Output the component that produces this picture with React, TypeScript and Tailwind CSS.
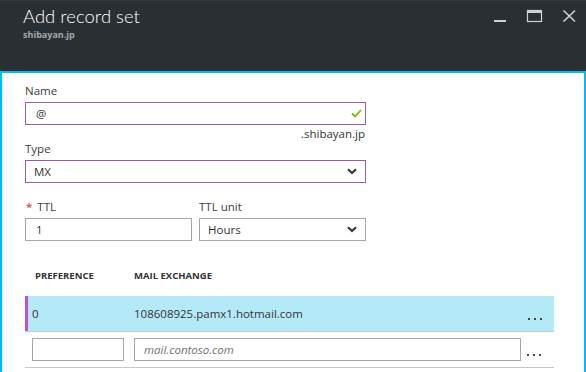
import React from "react";

function Chevron() {
  return (
    <svg width="10" height="7" viewBox="0 0 10 7" className="ml-auto">
      <polyline points="1,1.2 5,5 9,1.2" fill="none" stroke="#333" strokeWidth="2" />
    </svg>
  );
}

function Dots() {
  return (
    <div className="flex gap-[4px] self-end mb-[11px]">
      <div className="w-[2px] h-[2px] bg-[#444]" />
      <div className="w-[2px] h-[2px] bg-[#444]" />
      <div className="w-[2px] h-[2px] bg-[#444]" />
    </div>
  );
}

export default function App() {
  return (
    <div className="w-[586px] h-[372px] overflow-hidden bg-white flex flex-col font-['Open_Sans',sans-serif] text-[#333]">
      {/* Header */}
      <div className="h-[71px] bg-[#2a2f34] border-t border-[#353a40] flex shrink-0">
        <div className="pl-[23px] flex flex-col">
          <div className="mt-[3px] h-[24px] leading-[24px] text-[18.5px] font-light text-white font-['Lato',sans-serif]">
            Add record set
          </div>
          <div className="mt-px h-[12px] leading-[12px] text-[9px] font-bold text-[#a4a8ad]">shibayan.jp</div>
        </div>
        <div className="ml-auto flex pr-[6px] -mt-px">
          <svg width="34" height="30" viewBox="0 0 34 30">
            <rect x="4" y="20" width="12" height="2" fill="#cfd1d3" />
          </svg>
          <svg width="36" height="30" viewBox="0 0 36 30">
            <rect x="3.5" y="10.5" width="14" height="11" fill="none" stroke="#cfd1d3" strokeWidth="1.2" />
            <rect x="3" y="10" width="15" height="3" fill="#cfd1d3" />
          </svg>
          <svg width="20" height="30" viewBox="0 0 20 30">
            <path d="M3.5 10.5 L15 21.5 M15 10.5 L3.5 21.5" stroke="#cfd1d3" strokeWidth="1.6" />
          </svg>
        </div>
      </div>

      {/* Body */}
      <div className="flex-1 border-x-2 border-t-2 border-[#00bcf2] pl-[23px] pt-[10px] text-[11.5px]">
        <div className="h-[16px] leading-[16px] text-[#3c3c3c]">Name</div>
        <div className="mt-[3px] w-[341px] h-[23px] border border-[#9d5aa6] flex items-center pl-[10px] pr-[3px]">
          <span>@</span>
          <svg width="11" height="9" viewBox="0 0 11 9" className="ml-auto">
            <polyline points="1,4.5 4,7.5 10,1" fill="none" stroke="#7fba00" strokeWidth="1.8" />
          </svg>
        </div>
        <div className="mt-[2px] w-[341px] h-[14px] leading-[14px] text-right pr-px">.shibayan.jp</div>
        <div className="h-[16px] leading-[16px] text-[#3c3c3c]">Type</div>
        <div className="mt-[3px] w-[341px] h-[23px] border border-[#9d5aa6] flex items-center pl-[8px] pr-[8px]">
          <span>MX</span>
          <Chevron />
        </div>

        <div className="mt-[16px] flex gap-[7px] w-[341px]">
          <div className="w-[167px]">
            <div className="h-[16px] leading-[16px] pl-px text-[#3c3c3c]">
              <span className="text-[#e81123] mr-[5px]">*</span>TTL
            </div>
            <div className="mt-[3px] h-[23px] border border-[#a6a6a6] flex items-center pl-[10px]">1</div>
          </div>
          <div className="w-[167px]">
            <div className="h-[16px] leading-[16px] text-[#3c3c3c]">TTL unit</div>
            <div className="mt-[3px] h-[23px] border border-[#a6a6a6] flex items-center pl-[8px] pr-[8px]">
              <span>Hours</span>
              <Chevron />
            </div>
          </div>
        </div>

        {/* Table */}
        <div className="mt-[28px] h-[14px] leading-[14px] flex text-[9.5px] font-bold uppercase text-[#333]">
          <div className="w-[109px] pl-[10px]">Preference</div>
          <div>Mail exchange</div>
        </div>
        <div className="mt-[13px] w-[529px] h-[36px] bg-[#b4eaf8] border-b border-[#c8c8c8] flex items-center">
          <div className="w-[3px] self-stretch bg-[#bf4fd4]" />
          <div className="w-[106px] pl-[4px]">0</div>
          <div className="flex-1">108608925.pamx1.hotmail.com</div>
          <div className="mr-[12px] self-stretch flex">
            <Dots />
          </div>
        </div>
        <div className="w-[529px] h-[36px] border-b border-[#c8c8c8] flex items-center pl-[7px]">
          <div className="w-[92px] h-[23px] border border-[#a6a6a6]" />
          <div className="ml-[10px] w-[387px] h-[23px] border border-[#a6a6a6] flex items-center pl-[9px] italic text-[#707070]">
            mail.contoso.com
          </div>
          <div className="ml-[6px] self-stretch flex">
            <Dots />
          </div>
        </div>
      </div>
    </div>
  );
}
